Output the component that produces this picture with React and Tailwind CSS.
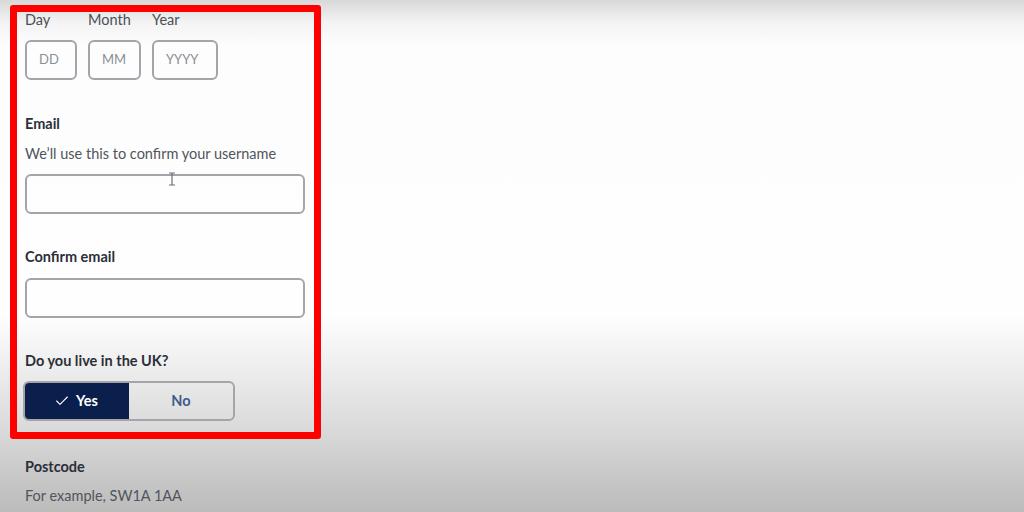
import React from 'react';
import { Check } from 'lucide-react';

const label = 'text-[14.5px] leading-5 font-bold text-[#2b2f38]';
const box = 'h-10 rounded-md border-2 border-[#a3a5aa] bg-transparent';

function DatePart({ name, hint, width }) {
    return (
        <div className="flex flex-col gap-2.5">
            <span className="text-[14.5px] leading-5 text-[#4a4f56]">{name}</span>
            <div className={`${box} ${width} flex items-center pl-3 text-[13px] text-[#8a8f95]`}>{hint}</div>
        </div>
    );
}

function Cursor() {
    return (
        <svg className="absolute left-[168px] top-[172px]" width="8" height="14" viewBox="0 0 8 14" fill="none" stroke="#6b6f75" strokeWidth="1.2">
            <path d="M1 1h6M4 1v12M1 13h6" />
        </svg>
    );
}

export default function App() {
    return (
        <div
            className="relative w-[1024px] h-[512px] overflow-hidden bg-[linear-gradient(to_bottom,#d8d8d8_0px,#f3f3f3_22px,#fdfdfd_45px,#fefefe_315px,#f5f5f5_345px,#e8e8e8_385px,#d8d8d8_435px,#c6c6c6_480px,#bcbcbc_512px)]"
            style={{ fontFamily: 'Lato, "Noto Sans", sans-serif' }}
        >
            {/* form column */}
            <div className="pl-[25px] pt-[10px] w-[310px] flex flex-col">
                <div className="flex gap-[11px]">
                    <DatePart name="Day" hint="DD" width="w-[52px]" />
                    <DatePart name="Month" hint="MM" width="w-[53px]" />
                    <DatePart name="Year" hint="YYYY" width="w-[66px]" />
                </div>

                <div className="mt-[34px] flex flex-col">
                    <span className={label}>Email</span>
                    <span className="mt-2.5 text-[14.5px] leading-5 text-[#50555c]">We&#8217;ll use this to confirm your username</span>
                    <div className={`${box} mt-2.5 w-[280px]`} />
                </div>

                <div className="mt-[33px] flex flex-col">
                    <span className={label}>Confirm email</span>
                    <div className={`${box} mt-[11px] w-[280px]`} />
                </div>

                <div className="mt-[33px] flex flex-col">
                    <span className={label}>Do you live in the UK?</span>
                    <div className="mt-2.5 -ml-[2px] w-[212px] h-10 flex rounded-md border-2 border-[#a3a5aa] overflow-hidden">
                        <div className="w-[106px] -my-[2px] -ml-[2px] bg-[#0b1f4c] rounded-l-md flex items-center justify-center gap-1.5 text-white text-[14.5px] font-bold">
                            <Check className="w-4 h-4" strokeWidth={1.6} />
                            Yes
                        </div>
                        <div className="flex-1 flex items-center justify-center text-[14.5px] font-bold text-[#3f5b8b]">No</div>
                    </div>
                </div>

                <div className="mt-9 flex flex-col">
                    <span className={label}>Postcode</span>
                    <span className="mt-[9px] text-[14.5px] leading-5 text-[#50555c]">For example, SW1A 1AA</span>
                </div>
            </div>

            <Cursor />

            {/* red annotation frame */}
            <div className="absolute left-[10px] top-[5px] w-[311px] h-[434px] border-[7px] border-[#ff0000] rounded-[3px] pointer-events-none" />
        </div>
    );
}
